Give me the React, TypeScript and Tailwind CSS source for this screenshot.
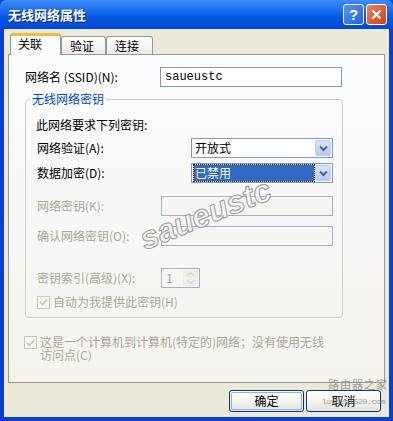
import React from 'react';

const cjk = { fontFamily: '"Noto Sans CJK SC", "Liberation Sans", sans-serif' };

function Chevron() {
  return (
    <svg width="9" height="7" viewBox="0 0 9 7">
      <path d="M1 1.5 L4.5 5 L8 1.5" stroke="#4d6185" strokeWidth="2" fill="none" />
    </svg>
  );
}

function Select({ value, selected }: { value: string; selected?: boolean }) {
  return (
    <div className="w-[142px] h-[20px] border border-[#7f9db9] bg-white flex items-stretch p-[1px]">
      <div className="flex-1 flex items-center pl-[1px]">
        {selected ? (
          <span className="h-full w-full flex items-center bg-[#316ac5] text-white pl-[1px] outline outline-1 outline-dotted outline-[#000]">
            {value}
          </span>
        ) : (
          <span className="pl-[1px]">{value}</span>
        )}
      </div>
      <div className="w-[16px] ml-[1px] rounded-[2px] bg-gradient-to-b from-[#d6e4fe] to-[#b5caf6] border border-[#bccdf5] flex items-center justify-center">
        <Chevron />
      </div>
    </div>
  );
}

function DisabledInput() {
  return <div className="w-[172px] h-[20px] border border-[#a3b2c6] bg-[#f6f5f0]" />;
}

function CheckBox() {
  return (
    <span className="w-[13px] h-[13px] border border-[#c9c7ba] bg-[#f6f5f0] flex items-center justify-center shrink-0">
      <svg width="9" height="8" viewBox="0 0 9 8">
        <path d="M1 4 L3.5 6.5 L8 1.5" stroke="#c9c7ba" strokeWidth="1.6" fill="none" />
      </svg>
    </span>
  );
}

function Tab({ label, active, w }: { label: string; active?: boolean; w: string }) {
  return (
    <div
      className={
        active
          ? `${w} h-[22px] -mb-[1px] relative z-10 border border-b-0 border-[#919b9c] rounded-t-[3px] bg-[#fcfcfe] border-t-[3px] border-t-[#f8b73e] flex items-start pt-[1px] pl-[7px]`
          : `${w} h-[18px] border border-b-0 border-[#919b9c] rounded-t-[3px] bg-gradient-to-b from-white to-[#ecebe5] flex items-center pl-[8px]`
      }
    >
      {label}
    </div>
  );
}

function XpButton({ label, def }: { label: string; def?: boolean }) {
  return (
    <div className="w-[75px] h-[22px] rounded-[3px] border border-[#003c74] bg-gradient-to-b from-white via-[#f4f4f0] to-[#e3e2da] p-[1px]">
      <div
        className={`h-full w-full rounded-[2px] flex items-center justify-center text-black ${
          def ? 'border border-[#8fb0ec]' : ''
        }`}
      >
        {label}
      </div>
    </div>
  );
}

export default function App() {
  return (
    <div className="w-[393px] h-[421px] bg-[#0a3fd6] flex flex-col text-[12px] leading-[14px] text-black relative overflow-hidden" style={cjk}>
      {/* title bar */}
      <div className="h-[29px] shrink-0 bg-gradient-to-b from-[#3d8df7] via-[#0b5fe8] to-[#0047d6] flex items-center justify-between pl-[8px] pr-[6px] rounded-t-[6px]">
        <span className="text-white font-bold text-[13px] [text-shadow:1px_1px_0_#0a1e7a]">无线网络属性</span>
        <div className="flex gap-[2px]">
          <div className="w-[21px] h-[21px] rounded-[3px] border border-white bg-gradient-to-br from-[#5a94f8] to-[#2561e0] flex items-center justify-center text-white font-bold text-[15px] leading-none" style={{ fontFamily: '"Liberation Sans", sans-serif' }}>
            ?
          </div>
          <div className="w-[21px] h-[21px] rounded-[3px] border border-white bg-gradient-to-br from-[#e9855f] to-[#c93f18] flex items-center justify-center">
            <svg width="11" height="11" viewBox="0 0 11 11">
              <path d="M1.5 1.5 L9.5 9.5 M9.5 1.5 L1.5 9.5" stroke="white" strokeWidth="2" />
            </svg>
          </div>
        </div>
      </div>

      {/* body */}
      <div className="flex-1 mx-[4px] mb-[4px] bg-[#ece9d8] flex flex-col px-[4px] pt-[4px]">
        <div className="flex pl-[2px] items-end h-[21px]">
          <Tab label="关联" active w="w-[51px]" />
          <Tab label="验证" w="w-[45px]" />
          <Tab label="连接" w="w-[47px]" />
        </div>

        {/* tab panel */}
        <div className="h-[329px] border border-[#919b9c] bg-gradient-to-b from-[#fcfcfe] to-[#f4f3ee] pl-[16px] pt-[12px] flex flex-col">
          <div className="flex items-center h-[20px]">
            <span className="w-[135px]">网络名 (SSID)(N):</span>
            <div className="w-[182px] h-[20px] border border-[#7f9db9] bg-white flex items-center pl-[4px]" style={{ fontFamily: '"Liberation Mono", monospace' }}>
              saueustc
            </div>
          </div>

          {/* group box */}
          <div className="relative mt-[12px] w-[318px] h-[219px] border border-[#d0d0bf] rounded-[4px] pl-[10px] pt-[18px] flex flex-col">
            <span className="absolute -top-[8px] left-[4px] px-[2px] bg-[#fbfbfc] text-[#0046d5]">无线网络密钥</span>
            <div className="h-[14px]">此网络要求下列密钥:</div>
            <div className="flex items-center mt-[6px]">
              <span className="w-[155px] pl-[1px]">网络验证(A):</span>
              <Select value="开放式" />
            </div>
            <div className="flex items-center mt-[5px]">
              <span className="w-[155px] pl-[1px]">数据加密(D):</span>
              <Select value="已禁用" selected />
            </div>
            <div className="flex items-center mt-[13px] text-[#aca899]">
              <span className="w-[125px] pl-[1px]">网络密钥(K):</span>
              <DisabledInput />
            </div>
            <div className="flex items-center mt-[10px] text-[#aca899]">
              <span className="w-[125px] pl-[1px]">确认网络密钥(O):</span>
              <DisabledInput />
            </div>
            <div className="flex items-center mt-[22px] text-[#aca899]">
              <span className="w-[125px] pl-[1px]">密钥索引(高级)(X):</span>
              <div className="w-[39px] h-[20px] border border-[#a3b2c6] bg-[#f6f5f0] flex items-stretch p-[1px]">
                <span className="flex-1 flex items-center pl-[3px]">1</span>
                <div className="w-[15px] flex flex-col gap-[1px]">
                  <div className="flex-1 bg-[#eeede5] rounded-[1px] flex items-center justify-center">
                    <svg width="7" height="4" viewBox="0 0 7 4"><path d="M0.5 3.5 L3.5 0.5 L6.5 3.5" stroke="#c9c7ba" fill="none" /></svg>
                  </div>
                  <div className="flex-1 bg-[#eeede5] rounded-[1px] flex items-center justify-center">
                    <svg width="7" height="4" viewBox="0 0 7 4"><path d="M0.5 0.5 L3.5 3.5 L6.5 0.5" stroke="#c9c7ba" fill="none" /></svg>
                  </div>
                </div>
              </div>
            </div>
            <div className="mt-[7px] pl-[1px] flex items-center gap-[3px]">
              <CheckBox />
              <span className="text-[#aca899]">自动为我提供此密钥(H)</span>
            </div>
          </div>

          <div className="flex items-start gap-[3px] mt-[17px] -ml-[1px]">
            <span className="mt-[1px]">
              <CheckBox />
            </span>
            <span className="text-[#aca899] leading-[13px] w-[330px]">
              这是一个计算机到计算机(特定的)网络；没有使用无线
              <br />
              访问点(C)
            </span>
          </div>
        </div>

        <div className="flex justify-end gap-[2px] mt-[7px] pr-[4px]">
          <XpButton label="确定" def />
          <XpButton label="取消" />
        </div>
      </div>

      {/* watermarks */}
      <div className="absolute left-[136px] top-[198px] -rotate-[22deg] whitespace-nowrap text-[32px] leading-none font-bold italic text-[#f3f3f3] [-webkit-text-stroke:1px_#9c9c9c] pointer-events-none" style={{ fontFamily: '"Liberation Sans", sans-serif' }}>
        saueustc
      </div>
      <div className="absolute left-[328px] top-[379px] whitespace-nowrap text-[11px] leading-none tracking-[1px] text-[#8a8a8a] opacity-80 pointer-events-none" style={cjk}>
        路由器之家
      </div>
      <div className="absolute left-[322px] top-[398px] whitespace-nowrap text-[8px] leading-none tracking-[-0.3px] text-[#8a8a8a] opacity-80 pointer-events-none" style={{ fontFamily: '"Liberation Mono", monospace' }}>
        luyouqi520.com
      </div>
    </div>
  );
}
